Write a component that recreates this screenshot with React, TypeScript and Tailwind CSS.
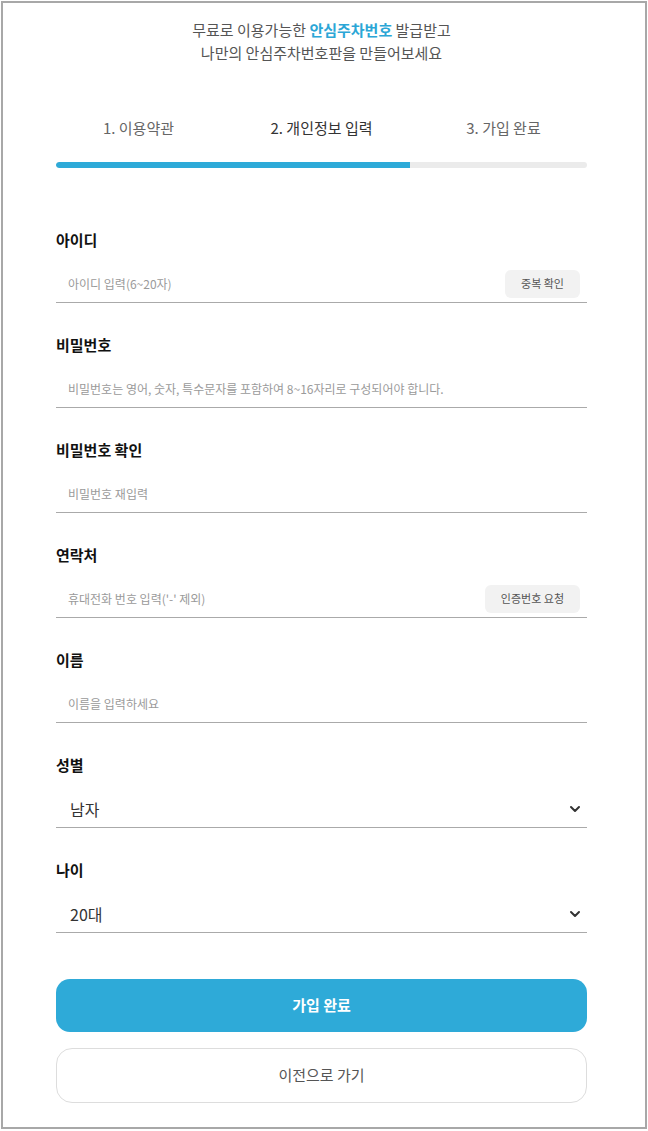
import React from 'react';
import { ChevronDown } from 'lucide-react';

const font = { fontFamily: '"Noto Sans CJK KR", "Noto Sans", sans-serif' };

type Field = {
    label: string;
    placeholder?: string;
    value?: string;
    action?: string;
    select?: boolean;
};

const fields: Field[] = [
    { label: '아이디', placeholder: '아이디 입력(6~20자)', action: '중복 확인' },
    { label: '비밀번호', placeholder: '비밀번호는 영어, 숫자, 특수문자를 포함하여 8~16자리로 구성되어야 합니다.' },
    { label: '비밀번호 확인', placeholder: '비밀번호 재입력' },
    { label: '연락처', placeholder: "휴대전화 번호 입력('-' 제외)", action: '인증번호 요청' },
    { label: '이름', placeholder: '이름을 입력하세요' },
    { label: '성별', value: '남자', select: true },
    { label: '나이', value: '20대', select: true },
];

const steps = ['1. 이용약관', '2. 개인정보 입력', '3. 가입 완료'];

export default function App() {
    return (
        <div className="w-[648px] h-[1131px] bg-white pt-px pl-px" style={font}>
            <div className="w-[646px] h-[1128px] border-2 border-[#a8a8a8] bg-white">
                <div className="w-[531px] ml-[53px] pt-[15px]">
                    {/* Heading */}
                    <div className="text-center text-[15px] leading-[23px] text-[#555]">
                        <p>
                            무료로 이용가능한 <span className="font-bold text-[#2ba6d6]">안심주차번호</span> 발급받고
                        </p>
                        <p>나만의 안심주차번호판을 만들어보세요</p>
                    </div>

                    {/* Steps */}
                    <div className="mt-[53px] grid grid-cols-3 text-[15px] leading-[22px]">
                        {steps.map((s, i) => (
                            <div
                                key={s}
                                className={`text-center ${i === 1 ? 'text-[#333]' : 'text-[#666]'} ${i === 0 ? 'pr-[12px]' : ''} ${i === 2 ? 'pl-[10px]' : ''}`}
                            >
                                {s}
                            </div>
                        ))}
                    </div>
                    <div className="mt-[23px] h-[6px] rounded-full bg-[#ebebeb] overflow-hidden">
                        <div className="h-full w-[354px] bg-[#2eaad8] rounded-l-full" />
                    </div>

                    {/* Form */}
                    <div className="mt-[61px] flex flex-col gap-[31px]">
                        {fields.map(f => (
                            <div key={f.label}>
                                <div className="text-[15px] leading-[22px] font-bold text-[#111]">{f.label}</div>
                                <div className="mt-[15px] h-[37px] border-b border-[#aaaaaa] flex items-center justify-between">
                                    {f.select ? (
                                        <>
                                            <span className="pl-[14px] text-[16px] text-[#333]">{f.value}</span>
                                            <ChevronDown className="w-[16px] h-[16px] mr-[4px] text-[#333]" strokeWidth={3} />
                                        </>
                                    ) : (
                                        <>
                                            <span className="pl-[12px] text-[12px] text-[#9a9a9a] whitespace-nowrap">{f.placeholder}</span>
                                            {f.action && (
                                                <button className="mr-[7px] mb-[1px] h-[28px] px-[16px] rounded-md bg-[#f2f2f2] text-[11px] text-[#555] whitespace-nowrap">
                                                    {f.action}
                                                </button>
                                            )}
                                        </>
                                    )}
                                </div>
                            </div>
                        ))}
                    </div>

                    {/* Buttons */}
                    <button className="mt-[46px] w-full h-[53px] rounded-[14px] bg-[#2eaad8] text-white text-[15px] font-bold">
                        가입 완료
                    </button>
                    <button className="mt-[16px] w-full h-[55px] rounded-[16px] border border-[#dddddd] bg-white text-[#555] text-[15px]">
                        이전으로 가기
                    </button>
                </div>
            </div>
        </div>
    );
}
